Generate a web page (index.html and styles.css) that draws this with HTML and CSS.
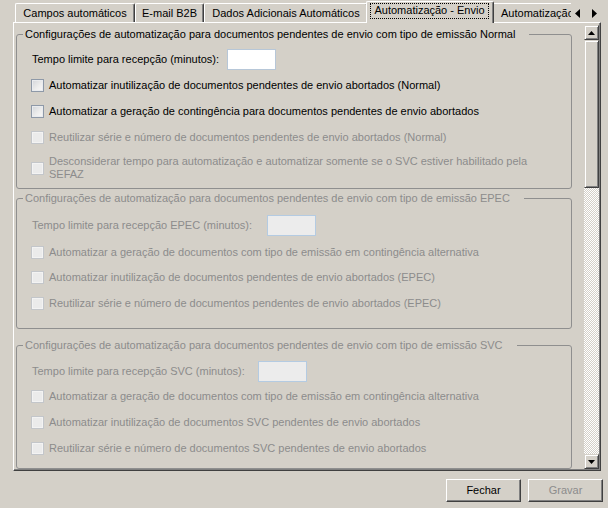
FILE: index.html
```html
<!DOCTYPE html>
<html lang="pt">
<head>
<meta charset="utf-8">
<title>Automatização - Envio</title>
<link rel="stylesheet" href="styles.css">
</head>
<body>
<div class="window">
  <div class="tabstrip">
    <div class="tabs">
      <div class="tab t1">Campos automáticos</div>
      <div class="tab t2">E-mail B2B</div>
      <div class="tab t3">Dados Adicionais Automáticos</div>
      <div class="tab active"><span class="focus">Automatização - Envio</span></div>
      <div class="tab t5">Automatização - Retorno</div>
    </div>
    <div class="tab-arrows">
      <svg width="5" height="9" viewBox="0 0 5 9"><polygon points="5,0 0,4.5 5,9" fill="#000"/></svg>
      <svg width="5" height="9" viewBox="0 0 5 9"><polygon points="0,0 5,4.5 0,9" fill="#000"/></svg>
    </div>
  </div>

  <div class="tabpage">
    <div class="content">
      <fieldset class="group g1">
        <legend>Configurações de automatização para documentos pendentes de envio com tipo de emissão Normal</legend>
        <div class="inner">
          <div class="field"><span class="lbl lbl-normal">Tempo limite para recepção (minutos):</span><span class="input"></span></div>
          <div class="cb r1"><span class="box"></span><span>Automatizar inutilização de documentos pendentes de envio abortados (Normal)</span></div>
          <div class="cb r2"><span class="box"></span><span>Automatizar a geração de contingência para documentos pendentes de envio abortados</span></div>
          <div class="cb r3 off"><span class="box"></span><span>Reutilizar série e número de documentos pendentes de envio abortados (Normal)</span></div>
          <div class="cb r4 off"><span class="box"></span><span class="wrap">Desconsiderar tempo para automatização e automatizar somente se o SVC estiver habilitado pela SEFAZ</span></div>
        </div>
      </fieldset>

      <fieldset class="group g2 off">
        <legend>Configurações de automatização para documentos pendentes de envio com tipo de emissão EPEC</legend>
        <div class="inner">
          <div class="field"><span class="lbl lbl-epec">Tempo limite para recepção EPEC (minutos):</span><span class="input"></span></div>
          <div class="cb r1"><span class="box"></span><span>Automatizar a geração de documentos com tipo de emissão em contingência alternativa</span></div>
          <div class="cb r2"><span class="box"></span><span>Automatizar inutilização de documentos pendentes de envio abortados (EPEC)</span></div>
          <div class="cb r3"><span class="box"></span><span>Reutilizar série e número de documentos pendentes de envio abortados (EPEC)</span></div>
        </div>
      </fieldset>

      <fieldset class="group g3 off">
        <legend>Configurações de automatização para documentos pendentes de envio com tipo de emissão SVC</legend>
        <div class="inner">
          <div class="field"><span class="lbl lbl-svc">Tempo limite para recepção SVC (minutos):</span><span class="input"></span></div>
          <div class="cb r1"><span class="box"></span><span>Automatizar a geração de documentos com tipo de emissão em contingência alternativa</span></div>
          <div class="cb r2"><span class="box"></span><span>Automatizar inutilização de documentos SVC pendentes de envio abortados</span></div>
          <div class="cb r3"><span class="box"></span><span>Reutilizar série e número de documentos SVC pendentes de envio abortados</span></div>
        </div>
      </fieldset>
    </div>

    <div class="scrollbar">
      <div class="sb-btn"><svg width="7" height="4" viewBox="0 0 7 4"><polygon points="0,4 3.5,0 7,4" fill="#000"/></svg></div>
      <div class="sb-thumb"></div>
      <div class="sb-track"></div>
      <div class="sb-btn"><svg width="7" height="4" viewBox="0 0 7 4"><polygon points="0,0 7,0 3.5,4" fill="#000"/></svg></div>
    </div>
  </div>

  <div class="buttons">
    <button class="btn">Fechar</button>
    <button class="btn disabled">Gravar</button>
  </div>
</div>
</body>
</html>
```

FILE: styles.css
```css
html, body {
  margin: 0;
  padding: 0;
}

body {
  background: #d4d0c8;
  font-family: "Liberation Sans", Arial, sans-serif;
  font-size: 11px;
  line-height: 13px;
  color: #000;
}

.window {
  width: 608px;
  height: 508px;
  overflow: hidden;
}

/* ---------- Tabs ---------- */
.tabstrip {
  display: flex;
  height: 22px;
  padding-left: 15px;
}

.tabs {
  display: flex;
  align-items: flex-end;
  flex: none;
  width: 556px;
  overflow-x: clip;
  overflow-y: visible;
}

.tab {
  flex: none;
  box-sizing: border-box;
  height: 19px;
  padding-top: 3px;
  border: 1px solid #fff;
  border-right-color: #404040;
  border-bottom: 0;
  border-radius: 2px 2px 0 0;
  box-shadow: inset -1px 0 #808080;
  text-align: center;
  white-space: nowrap;
  background: #d4d0c8;
}

.t1 { width: 120px; }
.t2 { width: 69px; }
.t3 { width: 164px; }
.t5 { width: 140px; text-align: left; padding-left: 8px; }

.tab.active {
  position: relative;
  z-index: 1;
  width: 128px;
  height: 22px;
  margin: 0 -2px -1px -2px;
  padding-top: 0;
}

.focus {
  display: block;
  margin: 1px 4px 0 3px;
  padding: 1px 0 2px;
  outline: 1px dotted #000;
  outline-offset: -1px;
}

.tab-arrows {
  flex: none;
  display: flex;
  align-items: flex-start;
  gap: 12px;
  width: 31px;
  box-sizing: border-box;
  padding: 9px 0 0 4px;
  background: #d4d0c8;
}

.tab-arrows svg {
  display: block;
}

/* ---------- Tab page ---------- */
.tabpage {
  box-sizing: border-box;
  display: flex;
  width: 588px;
  height: 449px;
  margin-left: 13px;
  padding: 0 1px 1px 0;
  border: 1px solid;
  border-color: #fff #404040 #404040 #fff;
  box-shadow: inset -1px -1px #808080;
}

.content {
  flex: 1;
  min-width: 0;
  padding: 5px 0 0 2px;
  overflow: hidden;
}

/* ---------- Group boxes ---------- */
.group {
  width: 556px;
  box-sizing: border-box;
  min-width: 0;
  margin: 0;
  padding: 0;
  border: 1px solid #8f8f8f;
  border-radius: 3px;
}

.group legend {
  margin-left: 6px;
  padding: 0 14px 0 2px;
  line-height: 13px;
}

.group .inner {
  padding-left: 14px;
}

.g1 .inner { padding-top: 8px; padding-bottom: 7px; }
.g2 { margin-top: 3px; }
.g2 .inner { padding-top: 10px; padding-bottom: 18px; }
.g3 { margin-top: 10px; }
.g3 .inner { padding-top: 9px; padding-bottom: 13px; }

.off, .off legend {
  color: #8c8c8c;
}

.field {
  display: flex;
  align-items: center;
  height: 21px;
}

.lbl {
  flex: none;
  margin-left: 1px;
  white-space: nowrap;
}

.lbl-normal { width: 195px; }
.lbl-epec { width: 235px; }
.lbl-svc { width: 226px; }

.input {
  flex: none;
  box-sizing: border-box;
  width: 49px;
  height: 21px;
  background: #fff;
  border: 1px solid #b7c7d8;
}

.off .input {
  background: #ececec;
  border-color: #b4cbe2;
}

.cb {
  display: flex;
  align-items: center;
  min-height: 13px;
  white-space: nowrap;
}

.cb .wrap {
  white-space: normal;
  width: 490px;
}

.box {
  flex: none;
  box-sizing: border-box;
  width: 13px;
  height: 13px;
  margin-right: 5px;
  border: 1px solid #8e99a8;
  background: linear-gradient(135deg, #d2d5d9 0%, #eeeeee 60%, #f8f8f8 100%);
  box-shadow: inset 0 0 0 1px #e9ebee;
}

.cb.off .box,
.off .cb .box {
  border-color: #c3c6ca;
  background: #ebebeb;
  box-shadow: inset 0 0 0 1px #f3f3f3;
}

.g1 .r1 { margin-top: 9px; }
.g1 .r2 { margin-top: 13px; }
.g1 .r3 { margin-top: 13px; }
.g1 .r4 { margin-top: 11px; }

.g2 .r1 { margin-top: 10px; }
.g2 .r2 { margin-top: 12px; }
.g2 .r3 { margin-top: 13px; }

.g3 .r1 { margin-top: 8px; }
.g3 .r2 { margin-top: 13px; }
.g3 .r3 { margin-top: 13px; }

/* ---------- Scrollbar ---------- */
.scrollbar {
  flex: none;
  display: flex;
  flex-direction: column;
  width: 15px;
  margin-top: 2px;
}

.sb-btn,
.sb-thumb {
  flex: none;
  box-sizing: border-box;
  background: #d4d0c8;
  border: 1px solid;
  border-color: #d4d0c8 #404040 #404040 #d4d0c8;
  box-shadow: inset 1px 1px #fff, inset -1px -1px #808080;
}

.sb-btn {
  height: 15px;
  display: flex;
  align-items: center;
  justify-content: center;
}

.sb-btn svg {
  display: block;
}

.sb-thumb {
  height: 148px;
}

.sb-track {
  flex: 1;
  background-color: #fff;
  background-image: conic-gradient(#d4d0c8 25%, #fff 0 50%, #d4d0c8 0 75%, #fff 0);
  background-size: 2px 2px;
}

/* ---------- Buttons ---------- */
.buttons {
  display: flex;
  justify-content: flex-end;
  gap: 7px;
  margin-top: 8px;
  padding-right: 5px;
}

.btn {
  box-sizing: border-box;
  width: 75px;
  height: 23px;
  padding: 0;
  font: inherit;
  color: #000;
  background: #d4d0c8;
  border: 1px solid;
  border-color: #fff #404040 #404040 #fff;
  border-radius: 0;
  box-shadow: inset -1px -1px #808080;
}

.btn.disabled {
  color: #8c8c8c;
}
```
